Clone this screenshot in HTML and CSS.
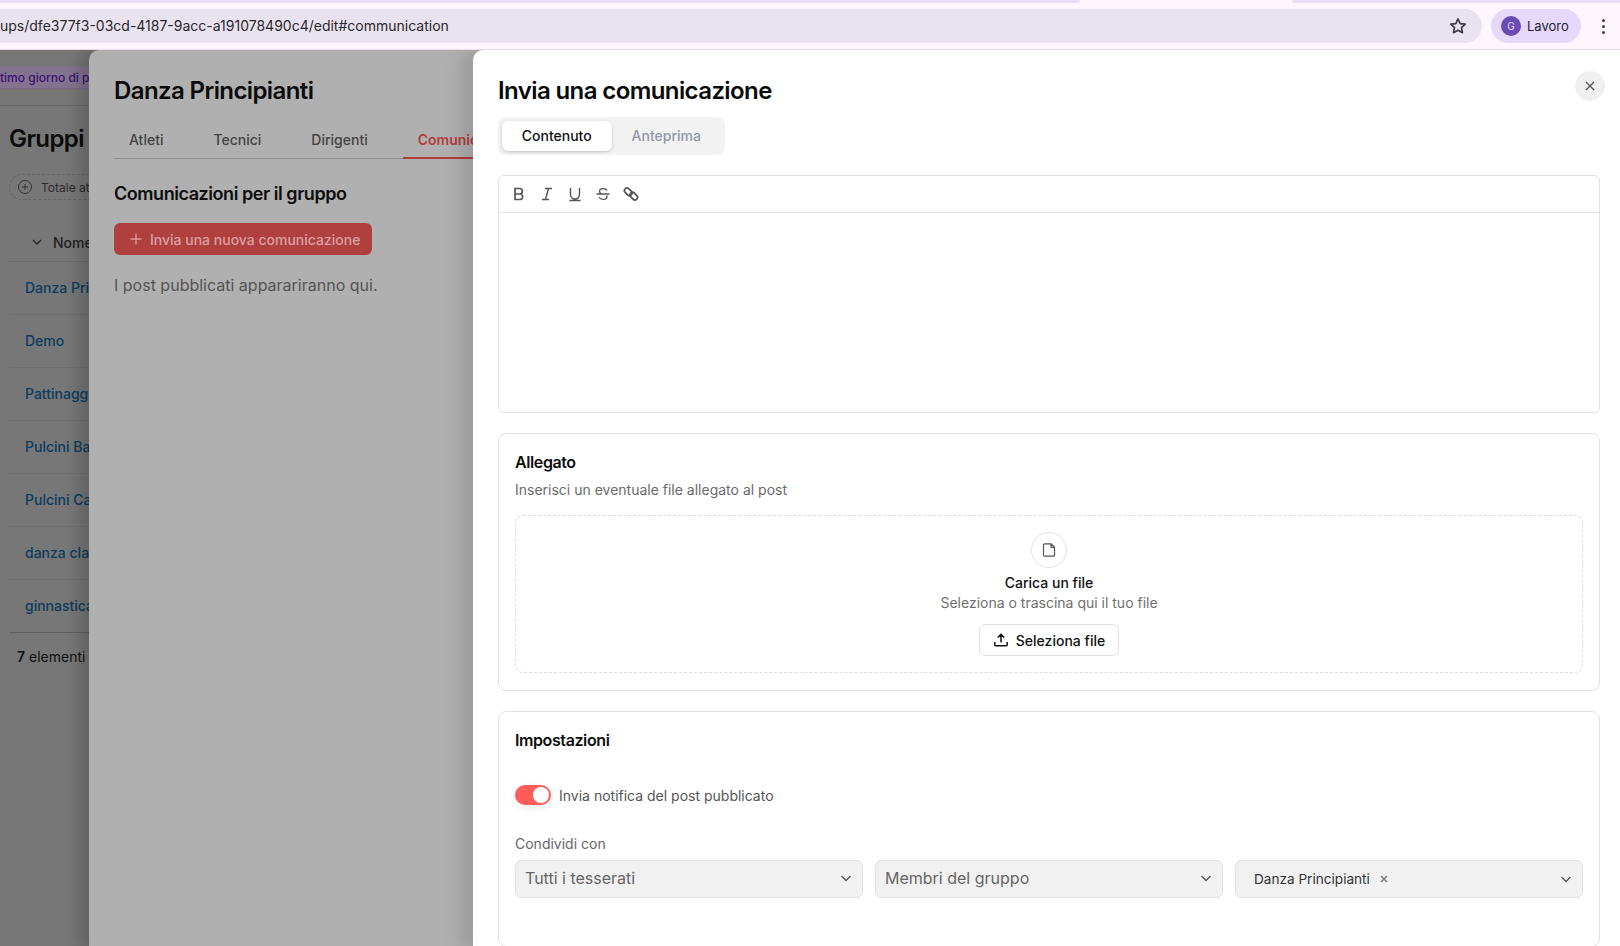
FILE: index.html
```html
<!DOCTYPE html>
<html lang="it">
<head>
    <title>Invia una comunicazione</title>
    <link rel="stylesheet" href="styles.css">
</head>
<body>
<div class="browser">
    <div class="tabstrip">
        <span class="tab_main"></span>
        <span class="tab_other"></span>
    </div>
    <div class="toolbar">
        <div class="address">
            <span class="url">ups/dfe377f3-03cd-4187-9acc-a191078490c4/edit#communication</span>
            <svg class="star" viewBox="0 0 24 24" width="20" height="20"><path d="M12 3.5l2.6 5.6 6.1.7-4.5 4.2 1.2 6L12 17l-5.4 3 1.2-6-4.5-4.2 6.1-.7z" fill="none" stroke="#3d3a42" stroke-width="2" stroke-linejoin="round"/></svg>
        </div>
        <div class="profile">
            <span class="avatar">G</span>
            <span>Lavoro</span>
        </div>
        <div class="kebab"><i></i><i></i><i></i></div>
    </div>
</div>

<div class="stage">
    <!-- pagina sotto, oscurata -->
    <div class="page">
        <div class="notice_bar"><div class="notice">timo giorno di p</div></div>
        <h1 class="page_title">Gruppi</h1>
        <div class="filter">
            <svg viewBox="0 0 16 16" width="16" height="16"><circle cx="8" cy="8" r="6.5" fill="none" stroke="#333" stroke-width="1"/><path d="M8 5v6M5 8h6" stroke="#333" stroke-width="1"/></svg>
            <span>Totale at</span>
        </div>
        <div class="table_head">
            <svg viewBox="0 0 12 12" width="12" height="12"><path d="M2 4l4 4 4-4" fill="none" stroke="#222" stroke-width="1.3"/></svg>
            <span>Nome</span>
        </div>
        <ul class="group_list">
            <li>Danza Pri</li>
            <li>Demo</li>
            <li>Pattinagg</li>
            <li>Pulcini Ba</li>
            <li>Pulcini Ca</li>
            <li>danza cla</li>
            <li>ginnastica</li>
        </ul>
        <div class="count"><b>7</b> elementi</div>
    </div>

    <!-- primo pannello -->
    <div class="panel_group">
        <h2 class="panel_title">Danza Principianti</h2>
        <div class="tabs">
            <span class="tab_item">Atleti</span>
            <span class="tab_item">Tecnici</span>
            <span class="tab_item">Dirigenti</span>
            <span class="tab_item tab_on">Comunicazioni</span>
        </div>
        <h3 class="section_title">Comunicazioni per il gruppo</h3>
        <div class="new_post">
            <svg viewBox="0 0 14 14" width="14" height="14"><path d="M7 1.5v11M1.5 7h11" stroke="#d99" stroke-width="1.3"/></svg>
            <span>Invia una nuova comunicazione</span>
        </div>
        <p class="empty_text">I post pubblicati apparariranno qui.</p>
    </div>

    <!-- secondo pannello -->
    <div class="panel_post">
        <div class="close_btn">
            <svg viewBox="0 0 12 12" width="12" height="12"><path d="M2 2l8 8M10 2l-8 8" stroke="#555" stroke-width="1.4"/></svg>
        </div>
        <h2 class="post_title">Invia una comunicazione</h2>
        <div class="switch">
            <span class="switch_item switch_on">Contenuto</span>
            <span class="switch_item">Anteprima</span>
        </div>

        <div class="editor">
            <div class="editor_bar">
                <svg viewBox="0 0 16 16" width="16" height="16"><path d="M4 2.500h4.600a2.700 2.700 0 0 1 0 5.500H4zM4 8h5.400a2.800 2.800 0 0 1 0 5.500H4z" fill="none" stroke="#555" stroke-width="1.7"/></svg>
                <svg viewBox="0 0 16 16" width="16" height="16"><path d="M6 2.500h7M3 13.500h7M9.500 2.500l-3 11" fill="none" stroke="#555" stroke-width="1.4"/></svg>
                <svg viewBox="0 0 16 16" width="16" height="16"><path d="M3.500 2v6.500a4.500 4.500 0 0 0 9 0V2M2.500 14.500h11" fill="none" stroke="#555" stroke-width="1.4"/></svg>
                <svg viewBox="0 0 16 16" width="16" height="16"><path d="M12 4.600C11.400 3.300 10 2.700 8.200 2.700 6.200 2.700 4.500 3.600 4.500 5.200c0 .9.500 1.800 1.500 2.300M1.500 8h13M11.500 9.500c.3.400.5.900.5 1.400 0 1.600-1.700 2.400-3.800 2.400-1.900 0-3.500-.7-4.200-2.100" fill="none" stroke="#555" stroke-width="1.3"/></svg>
                <svg viewBox="0 0 16 16" width="16" height="16"><rect x="1" y="3.200" width="8.500" height="5.200" rx="2.600" transform="rotate(45 5.250 5.800)" fill="none" stroke="#555" stroke-width="1.7"/><rect x="6.500" y="7.600" width="8.500" height="5.200" rx="2.600" transform="rotate(45 10.750 10.200)" fill="none" stroke="#555" stroke-width="1.7"/></svg>
            </div>
            <div class="editor_body"></div>
        </div>

        <div class="card card_attach">
            <h4 class="card_title">Allegato</h4>
            <p class="card_sub">Inserisci un eventuale file allegato al post</p>
            <div class="dropzone">
                <span class="file_icon">
                    <svg viewBox="0 0 16 16" width="16" height="16"><path d="M2.500 2.800a1 1 0 0 1 1-1h6.700l3.300 3.300v8.100a1 1 0 0 1-1 1h-9a1 1 0 0 1-1-1zM10 1.800v3.500h3.500" fill="none" stroke="#555" stroke-width="1.2" stroke-linejoin="round"/></svg>
                </span>
                <span class="drop_title">Carica un file</span>
                <span class="drop_sub">Seleziona o trascina qui il tuo file</span>
                <span class="pick_btn">
                    <svg viewBox="0 0 16 16" width="16" height="16"><path d="M8 10.500V2.500M4.800 5.500L8 2.300l3.200 3.200M1.800 10v2.800a1 1 0 0 0 1 1h10.400a1 1 0 0 0 1-1V10" fill="none" stroke="#111" stroke-width="1.5"/></svg>
                    Seleziona file
                </span>
            </div>
        </div>

        <div class="card card_settings">
            <h4 class="card_title">Impostazioni</h4>
            <div class="notify_row">
                <span class="toggle"><i></i></span>
                <span>Invia notifica del post pubblicato</span>
            </div>
            <div class="share_label">Condividi con</div>
            <div class="share_row">
                <div class="select">
                    <span>Tutti i tesserati</span>
                    <svg viewBox="0 0 12 12" width="12" height="12"><path d="M1.500 4l4.500 4.500L10.500 4" fill="none" stroke="#555" stroke-width="1.3"/></svg>
                </div>
                <div class="select">
                    <span>Membri del gruppo</span>
                    <svg viewBox="0 0 12 12" width="12" height="12"><path d="M1.500 4l4.500 4.500L10.500 4" fill="none" stroke="#555" stroke-width="1.3"/></svg>
                </div>
                <div class="select select_multi">
                    <span class="chip">Danza Principianti
                        <svg viewBox="0 0 8 8" width="8" height="8"><path d="M1 1l6 6M7 1L1 7" stroke="#777" stroke-width="1.3"/></svg>
                    </span>
                    <svg viewBox="0 0 12 12" width="12" height="12"><path d="M1.500 4l4.500 4.500L10.500 4" fill="none" stroke="#555" stroke-width="1.3"/></svg>
                </div>
            </div>
        </div>
    </div>
</div>
</body>
</html>
```

FILE: styles.css
```css
* {
    box-sizing: border-box;
    font-family: Inter, "Liberation Sans", Arial, sans-serif;
}

html, body {
    margin: 0;
    height: 946px;
    overflow: hidden;
    background-color: #fff;
}

h1, h2, h3, h4, p, ul {
    margin: 0;
    padding: 0;
}

svg {
    flex: none;
}

.browser {
    height: 50px;
    background-color: #fdf6fe;
    border-bottom: 1px solid #e4dce6;
}

.tabstrip {
    height: 9px;
    display: flex;
    gap: 212px;
}

.tab_main {
    width: 1080px;
    height: 3px;
    background-color: #e8dcf8;
    border-radius: 0 0 10px 0;
}

.tab_other {
    width: 328px;
    height: 3px;
    background-color: #e8dcf8;
    border-radius: 0 0 0 10px;
}

.toolbar {
    display: flex;
    align-items: center;
    height: 34px;
}

.address {
    width: 1482px;
    height: 34px;
    display: flex;
    align-items: center;
    justify-content: space-between;
    padding: 0 14px 1px 0;
    background-color: #e9e3ef;
    border-radius: 0 17px 17px 0;
}

.url {
    font-size: 14px;
    color: #29262c;
}

.profile {
    width: 90px;
    height: 34px;
    margin-left: 9px;
    display: flex;
    align-items: center;
    gap: 6px;
    padding-left: 10px;
    font-size: 13px;
    color: #241f2e;
    background-color: #e6d8fb;
    border-radius: 17px;
}

.avatar {
    width: 20px;
    height: 20px;
    display: flex;
    align-items: center;
    justify-content: center;
    font-size: 10px;
    color: #e6dcf5;
    background-color: #6a4bb4;
    border-radius: 50%;
}

.kebab {
    margin-left: 21px;
    display: flex;
    flex-direction: column;
    gap: 3px;
}

.kebab i {
    width: 3px;
    height: 3px;
    background-color: #3d3a42;
    border-radius: 50%;
}

.stage {
    position: relative;
    height: 896px;
    overflow: hidden;
    background-color: #777;
}

.page {
    width: 89px;
    height: 896px;
    overflow: hidden;
    padding-top: 17px;
    color: #111;
}

.notice_bar {
    height: 39px;
    border-bottom: 1px solid #6a6a6a;
}

.notice {
    height: 22px;
    background-color: #84738f;
    border-bottom: 1px solid #7a6c86;
    font-size: 12px;
    font-weight: 500;
    line-height: 21px;
    color: #3a1470;
    white-space: nowrap;
}

.page_title {
    margin: 17px 0 0 9px;
    font-size: 24px;
    font-weight: 600;
    line-height: 32px;
    letter-spacing: -0.6px;
    color: #0b0b0b;
}

.filter {
    margin: 19px 0 0 9px;
    width: 120px;
    height: 26px;
    padding-left: 7px;
    display: flex;
    align-items: center;
    gap: 8px;
    border: 1px dashed #666;
    border-radius: 13px;
    font-size: 12px;
    color: #2c2c2c;
    white-space: nowrap;
}

.table_head {
    margin: 23px 0 0 9px;
    height: 39px;
    padding-left: 22px;
    display: flex;
    align-items: center;
    gap: 10px;
    font-size: 14px;
    font-weight: 500;
    color: #222;
    border-bottom: 1px solid #6b6b6b;
}

.group_list {
    list-style-type: none;
    margin-left: 9px;
}

.group_list li {
    height: 53px;
    padding-left: 16px;
    line-height: 52px;
    font-size: 14px;
    font-weight: 500;
    color: #0c3c5e;
    white-space: nowrap;
    border-bottom: 1px solid #6f6f6f;
}

.group_list li:last-child {
    border-bottom-color: #5e5e5e;
}

.count {
    margin: 15px 0 0 17px;
    font-size: 14px;
    white-space: nowrap;
    color: #111;
}

.count b {
    font-weight: 600;
}

.panel_group {
    position: absolute;
    top: 0;
    left: 89px;
    width: 500px;
    height: 900px;
    padding: 25px 0 0 25px;
    background-color: #b0b0b0;
    border-radius: 10px 0 0 0;
    box-shadow: -10px 0 16px rgba(0, 0, 0, 0.18);
}

.panel_title {
    font-size: 24px;
    font-weight: 600;
    line-height: 32px;
    letter-spacing: -0.6px;
    color: #0a0a0a;
}

.tabs {
    margin-top: 16px;
    height: 36px;
    display: flex;
    border-bottom: 1px solid #8f8f8f;
    font-size: 14px;
    font-weight: 500;
    color: #444;
}

.tab_item {
    padding: 0 15px;
    margin-right: 20px;
    line-height: 34px;
}

.tab_on {
    margin-right: 0;
    height: 36px;
    color: #b23c3c;
    font-weight: 600;
    border-bottom: 2px solid #b23c3c;
}

.section_title {
    margin-top: 23px;
    font-size: 18px;
    font-weight: 600;
    line-height: 24px;
    letter-spacing: -0.45px;
    color: #0d0d0d;
}

.new_post {
    margin-top: 17px;
    width: 258px;
    height: 32px;
    padding-left: 15px;
    display: flex;
    align-items: center;
    gap: 7px;
    font-size: 14px;
    font-weight: 500;
    white-space: nowrap;
    color: #d9a0a0;
    background-color: #b04040;
    border-radius: 6px;
}

.empty_text {
    margin-top: 18px;
    font-size: 16px;
    line-height: 24px;
    color: #555;
}

.panel_post {
    position: absolute;
    top: 0;
    left: 473px;
    right: 0;
    height: 900px;
    padding: 25px 20px 0 25px;
    background-color: #fff;
    border-radius: 10px 0 0 0;
    box-shadow: -12px 0 18px rgba(0, 0, 0, 0.12);
}

.close_btn {
    position: absolute;
    top: 21px;
    right: 15px;
    width: 30px;
    height: 30px;
    display: flex;
    align-items: center;
    justify-content: center;
    background-color: #f0f0f0;
    border-radius: 50%;
}

.post_title {
    font-size: 24px;
    font-weight: 600;
    line-height: 32px;
    letter-spacing: -0.6px;
    color: #0a0a0a;
}

.switch {
    margin-top: 10px;
    width: 227px;
    height: 38px;
    padding: 4px;
    display: flex;
    background-color: #f2f2f3;
    border-radius: 8px;
    font-size: 14px;
    font-weight: 500;
    color: #9198a8;
}

.switch_item {
    width: 110px;
    line-height: 30px;
    text-align: center;
}

.switch_on {
    color: #111;
    background-color: #fff;
    border-radius: 6px;
    box-shadow: 0 1px 3px rgba(0, 0, 0, 0.2);
}

.editor {
    margin-top: 20px;
    height: 238px;
    border: 1px solid #e2e2e2;
    border-radius: 6px;
}

.editor_bar {
    height: 37px;
    padding-left: 12px;
    display: flex;
    align-items: center;
    gap: 12px;
    border-bottom: 1px solid #e2e2e2;
}

.card {
    margin-top: 20px;
    padding: 16px;
    border: 1px solid #e2e2e2;
    border-radius: 8px;
}

.card_attach {
    height: 258px;
}

.card_settings {
    height: 236px;
}

.card_title {
    font-size: 16px;
    font-weight: 600;
    line-height: 24px;
    letter-spacing: -0.4px;
    color: #0d0d0d;
}

.card_sub {
    margin-top: 6px;
    font-size: 14px;
    line-height: 20px;
    color: #6b6b6b;
}

.dropzone {
    margin-top: 15px;
    height: 158px;
    padding-top: 16px;
    display: flex;
    flex-direction: column;
    align-items: center;
    border: 1px dashed #dcdcdc;
    border-radius: 8px;
}

.file_icon {
    width: 36px;
    height: 36px;
    display: flex;
    align-items: center;
    justify-content: center;
    border: 1px solid #e2e2e2;
    border-radius: 50%;
}

.drop_title {
    margin-top: 5px;
    font-size: 14px;
    font-weight: 500;
    line-height: 20px;
    color: #111;
}

.drop_sub {
    font-size: 14px;
    line-height: 20px;
    color: #707070;
}

.pick_btn {
    margin-top: 11px;
    width: 140px;
    height: 32px;
    display: flex;
    align-items: center;
    justify-content: center;
    gap: 7px;
    font-size: 14px;
    font-weight: 500;
    color: #111;
    border: 1px solid #e2e2e2;
    border-radius: 6px;
}

.notify_row {
    margin-top: 33px;
    height: 20px;
    display: flex;
    align-items: center;
    gap: 8px;
    font-size: 14px;
    color: #555;
}

.toggle {
    width: 36px;
    height: 20px;
    padding: 2px;
    display: flex;
    justify-content: flex-end;
    background-color: #ff5c5c;
    border-radius: 10px;
    box-shadow: 0 3px 8px rgba(0, 0, 0, 0.08);
}

.toggle i {
    width: 16px;
    height: 16px;
    background-color: #fff;
    border-radius: 50%;
}

.share_label {
    margin-top: 29px;
    font-size: 14px;
    line-height: 20px;
    color: #666;
}

.share_row {
    margin-top: 6px;
    display: grid;
    grid-template-columns: repeat(3, 1fr);
    gap: 12px;
}

.select {
    height: 38px;
    padding: 0 10px 2px 9px;
    display: flex;
    align-items: center;
    justify-content: space-between;
    font-size: 16px;
    color: #666;
    background-color: #f1f1f1;
    border: 1px solid #e2e2e2;
    border-radius: 6px;
}

.select_multi {
    padding-left: 18px;
    padding-bottom: 0;
}

.chip {
    display: flex;
    align-items: center;
    gap: 10px;
    font-size: 13.6px;
    color: #333;
}
```
